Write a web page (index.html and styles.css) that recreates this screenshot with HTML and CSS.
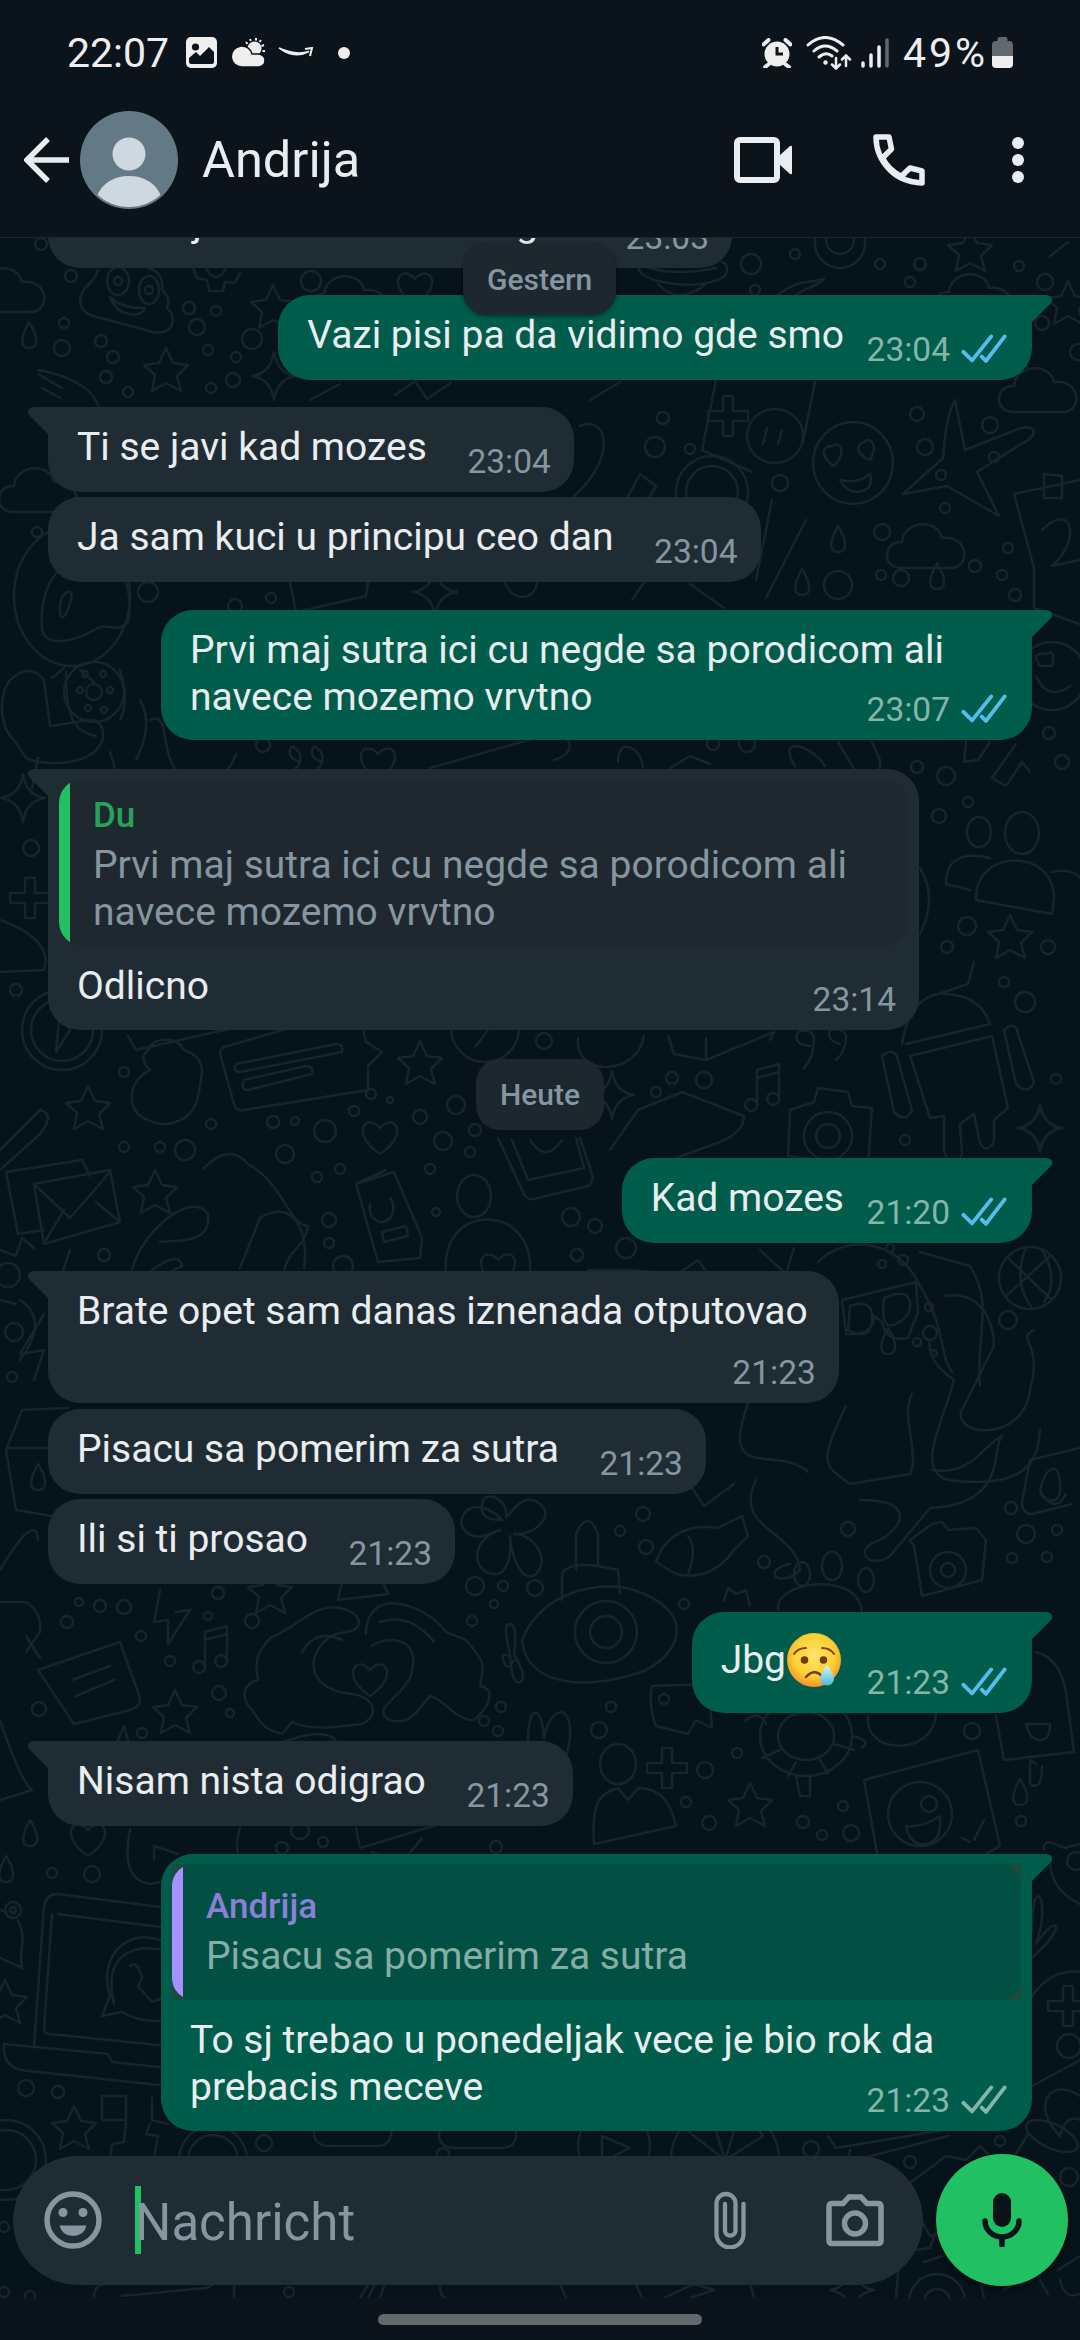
FILE: index.html
```html
<!DOCTYPE html>
<html lang="de">
<head>
<meta charset="utf-8">
<title>Andrija</title>
<link rel="stylesheet" href="styles.css">
</head>
<body>
<svg class="defs" aria-hidden="true">
  <symbol id="ticks" viewBox="0 0 46 30"><path d="M2 18l9 9L31 2M21 23l4.500 4.500L45 2" fill="none" stroke="currentColor" stroke-width="4" stroke-linecap="round" stroke-linejoin="round" transform="translate(.5 .5) scale(.96)"/></symbol>
  <path id="star" d="M0-22L7-7 22-5 11 6 15 21 0 13-14 21-11 5-22-5-7-7z"/>
  <path id="spark" d="M0-24Q3-3 22 0 3 3 0 24-3 3-22 0-3-3 0-24z"/>
  <path id="heart" d="M0 18C-30-2-14-24 0-8 14-24 30-2 0 18z"/>
  <path id="drop" d="M0-14C10 2 9 12 0 12S-9 2 0-14z"/>
  <path id="cloud" d="M-26 20C-48 20-44-8-26-6-24-28 10-30 14-10 40-14 44 20 22 20z"/>
  <path id="note" d="M-10 14v-34l22-6v34M-10-12l22-6M-10 14a6 6 0 1 1-6-5q4 0 6 5zM12 8a6 6 0 1 1-6-5q4 0 6 5z"/>
  <path id="plus" d="M-5-20h10v15h15V5H5v15H-5V5h-15V-5h15z"/>
</svg>

<div class="screen">
  <header class="top">
    <div class="status">
      <span class="clock">22:07</span>
      <svg class="s-img" viewBox="0 0 31 31"><rect width="31" height="31" rx="5" fill="#eee"/><circle cx="9.500" cy="10" r="3.600" fill="#0b141b"/><path d="M3 24v-3l7-6 4 4 9-9 5 5v10q0 2-2 2H5q-2 0-2-3z" fill="#0b141b"/></svg>
      <svg class="s-cloud" viewBox="0 0 33 29"><circle cx="22.500" cy="10.500" r="7" fill="#eee"/><path d="M14 4l1.500 2M18 1l.8 2M24 0v2.500M29 2l-1.500 2M32 7l-2.500 1M33 13h-2.500" stroke="#eee" stroke-width="2"/><path d="M10 29a10.500 10.500 0 1 1 10-13h7q6 1 6 6.500t-6 6.500z" fill="#eee" stroke="#0b141b" stroke-width="1.500"/></svg>
      <svg class="s-smile" viewBox="0 0 36 12"><path d="M1 1Q16 12.500 31 4.500 17 8.500 1 1z" fill="#eee" stroke="#eee" stroke-width="1.500"/><path d="M27 2l7-1-2 8" fill="none" stroke="#eee" stroke-width="2"/></svg>
      <i class="s-dot"></i>
      <span class="spacer"></span>
      <svg class="s-alarm" viewBox="0 0 30 30"><circle cx="15" cy="16" r="12.500" fill="#eee"/><path d="M7 26l-4 3M23 26l4 3M1.500 6.500l5-4.500M28.500 6.500l-5-4.500" stroke="#eee" stroke-width="4" stroke-linecap="round"/><path d="M15 9v7h6" fill="none" stroke="#0b141b" stroke-width="3"/></svg>
      <svg class="s-wifi" viewBox="0 0 46 34" fill="none" stroke="#eee" stroke-width="3" stroke-linecap="round"><path d="M2 9q17-15 35 0M8 15q11-10 23 0M13 21q7-6 13-1"/><circle cx="19.500" cy="26.500" r="1.500" fill="#eee" stroke-width="1.500"/><path d="M30 22v10M26 28.500l4 4 4-4M40 30V20M36 23.500l4-4 4 4" stroke-width="2.500"/></svg>
      <svg class="s-signal" viewBox="0 0 28 30" stroke-width="3.500" stroke-linecap="round" stroke="#eee"><path d="M2 25v3M10 17v11M18 9v19"/><path d="M26 2v26" stroke="#62686e"/></svg>
      <span class="percent">49%</span>
      <svg class="s-batt" viewBox="0 0 21 31"><path d="M5.500 4V2q0-2 2-2h6q2 0 2 2v2H17q4 0 4 4v11H0V8q0-4 4-4z" fill="#62686e"/><path d="M0 19h21v8q0 4-4 4H4q-4 0-4-4z" fill="#eee"/></svg>
    </div>
    <div class="bar">
      <svg class="back" viewBox="0 0 46 46"><path d="M45 23H4M24 2L3 23l21 21" fill="none" stroke="#e9edef" stroke-width="5.500"/></svg>
      <svg class="avatar" viewBox="0 0 98 98"><defs><clipPath id="face"><circle cx="49" cy="49" r="47"/></clipPath></defs><circle cx="49" cy="49" r="49" fill="#637985"/><g fill="#cfd8e0" clip-path="url(#face)"><circle cx="49" cy="43" r="16.500"/><path d="M17 85c5-13 17-20 32-20s27 7 32 20v13H17z"/></g></svg>
      <span class="name">Andrija</span>
      <span class="spacer"></span>
      <svg class="video" viewBox="0 0 58 46"><rect x="3" y="3" width="40" height="40" rx="3" fill="none" stroke="#e9edef" stroke-width="6"/><path d="M45 19l11-10q2-1 2 1v26q0 2-2 1L45 27z" fill="#e9edef"/></svg>
      <svg class="phone" viewBox="0 0 52 52"><path d="M3 3h13l2.500 12-9 9C14 33 20 38 28 42.500l9-8.500L49 37v12Q29 48 17 36 3 22 3 3zM28 43l4-4" fill="none" stroke="#e9edef" stroke-width="5.500" stroke-linejoin="round"/></svg>
      <svg class="more" viewBox="0 0 12 46" fill="#e9edef"><circle cx="6" cy="6" r="6"/><circle cx="6" cy="23" r="6"/><circle cx="6" cy="40" r="6"/></svg>
    </div>
  </header>

  <main class="chat">
    <svg class="wallpaper" viewBox="0 238 1080 2060" aria-hidden="true">
      <g id="dots">
        <path class="dots" d=""/>
      </g>
      <g>
        <use href="#star" x="273" y="307"/><use href="#star" x="166" y="370"/><use href="#star" x="970" y="250"/><use href="#star" x="1068" y="303"/><use href="#star" x="155" y="1192"/><use href="#star" x="420" y="1063"/><use href="#star" x="88" y="1108"/><use href="#star" x="175" y="1712"/><use href="#star" x="270" y="1592"/><use href="#star" x="1010" y="937"/><use href="#star" x="5" y="2002"/><use href="#star" x="74" y="2128"/><use href="#star" x="750" y="1805"/>
        <use href="#spark" x="274" y="376"/><use href="#spark" x="435" y="592"/><use href="#spark" x="23" y="798"/><use href="#spark" x="612" y="1095"/><use href="#spark" x="1040" y="1128"/><use href="#spark" x="852" y="2290"/>
        <use href="#heart" x="415" y="287"/><use href="#heart" x="378" y="762"/><use href="#heart" x="380" y="1136"/><use href="#heart" x="370" y="1678"/><use href="#heart" x="498" y="1268"/><use href="#heart" x="88" y="1838"/>
        <use href="#drop" x="29" y="336"/><use href="#drop" x="838" y="540"/><use href="#drop" x="802" y="583"/><use href="#drop" x="937" y="577"/><use href="#drop" x="888" y="1342"/><use href="#drop" x="30" y="1834"/><use href="#drop" x="6" y="1870"/><use href="#drop" x="1020" y="1793"/><use href="#drop" x="38" y="1478"/>
        <use href="#cloud" x="8" y="292"/><use href="#cloud" x="975" y="298"/><use href="#cloud" x="1040" y="392"/><use href="#cloud" x="928" y="548"/><use href="#cloud" x="40" y="492"/><use href="#cloud" x="350" y="300"/><use href="#cloud" x="355" y="2126"/><use href="#cloud" x="480" y="2128"/>
        <use href="#note" x="767" y="1090"/><use href="#note" x="215" y="1652"/>
        <use href="#plus" x="30" y="898"/><use href="#plus" x="667" y="1768"/><use href="#plus" x="728" y="416"/><use href="#plus" x="1068" y="2006"/>
      </g>
      <!-- grinning swirl, gear, saucer, brush -->
      <path d="M98 270c-4 14-14 14-17 26-4 14 8 20 20 22l52 14c22 4 24-16 14-24 4-10-2-16-5-18 2-14-6-20-14-22M110 297q12 12 35 11-3 8-16 6t-19-17z"/>
      <ellipse cx="118" cy="281" rx="11" ry="14"/><ellipse cx="149" cy="290" rx="10" ry="14"/><circle cx="118" cy="281" r="4"/><circle cx="149" cy="290" r="4"/>
      <path d="M193 268l4 10 10 2 2 11h14l2-9 10 1 5-10M206 268q10 18 20 0M640 262c-6 12 8 16 22 20 20 4 45 4 60-4 8-6 6-14 0-16M658 284q20 22 48 0M650 268q28 8 66 0"/>
      <path d="M778 295c20-16 32-12 46-16-8 8-22 10-28 16M1050 256l18-14M38 370c24 4 60 16 62 44M38 374l24 14M42 388l18 10M310 400l30-16M395 395l20-14 12 18 24-16M590 400l30-18"/>
      <!-- calculator, emoji, aeroplane, cards -->
      <path d="M716 380l-14 70 50 22M815 382l-12 60"/><ellipse cx="775" cy="436" rx="28" ry="27"/><path d="M767 428l-4 16M782 430l-4 14"/>
      <ellipse cx="853" cy="463" rx="40" ry="41"/><path d="M832 446c-12 0-10 12 2 20 12-12 8-26-2-20zM864 442c-10 4-6 14 6 18 8-14 2-24-6-18zM840 480q18 4 30-6 4 16-12 18-12 0-18-12z"/>
      <path d="M955 400c-10 20-10 40-12 58l-40 36 44-8 52 30-22-44 44-28c18-8 16-20 0-16l-56 22z"/>
      <path d="M1080 480l-66 14 20 74v40l46 16M1044 474v24h18v-22zM1042 530c30-30 40 10 10 36l28-6"/>
      <path d="M580 426c26-12 40 30-8 72M626 500l14-26 16 12-10 16"/><circle cx="712" cy="492" r="26"/><circle cx="712" cy="492" r="36"/>
      <path d="M772 500l-16 80M806 520l-40 78M632 600l30-44M690 584l34 24"/>
      <!-- balloon -->
      <ellipse cx="72" cy="596" rx="58" ry="70"/><path d="M42 628c-4-50 30-80 56-76 24 6 36 40 30 70-14 14-18-2-34 8-20 12-50 18-52-2zM64 668l-12 10M80 670l14 12M60 610q0-16 8-18t-2 22q-6 8-6-4zM290 582l6 30 70-16 2-14M505 582c6 20 30 20 32 0"/>
      <!-- glove, cookie, flowers -->
      <path d="M10 680c-14 20-8 50 4 60l12 18c24 10 60 4 70-8 12-12 8-30-6-30l-40 6-6-46q-14-18-34 0zM38 758l-6 30M110 752l10 34M66 672c0 50 10 60 30 64M120 670q10 30 0 50"/>
      <circle cx="94" cy="692" r="30"/><path d="M140 700q14 24-4 60M150 720c20-10 10 30 26 50 20 24 50 14 60-16"/>
      <path d="M300 762q-12-4-10-12t10 4q2 10-6 16M322 762q-12-4-10-12t10 4q2 10-6 16M430 768l120-34c20-4 30 20 4 26M618 762c0-30 30-10 24 12M670 768l20-12 20 8M795 766c-20-34 20-18 30 0M838 742l20 34q24 4 22-16l-8-18M966 742l-2 20 14-2 12-18M1016 744l-24 34 14 8 16-24 8 10"/>
      <circle cx="1052" cy="676" r="34"/><path d="M1036 676q12 26 34 10M1040 666q-10-14 6-12 10-6 6 12z"/>
      <!-- people -->
      <ellipse cx="979" cy="832" rx="12" ry="15"/><ellipse cx="1022" cy="833" rx="17" ry="21"/><path d="M976 898c0-50 78-50 78 0l-2 16-76-14zM970 890l-24-6q0-36 44-26M1052 872q20-4 28 6M920 868q18 30 0 66M0 920q54 20 44 50L0 972"/>
      <!-- compass, speech card, tree -->
      <circle cx="62" cy="1030" r="40"/><circle cx="62" cy="1030" r="31"/><path d="M60 1010l10 20-14 22zM128 1036l8 14 150-34 70-6M228 1046l130-38 8 34 16 10-14 14v24l-124 20q-8 2-10-6l-14-50q0-8 8-8zM236 1064l100-20q8 0 6 8l-102 20q-8 0-4-8zM244 1080l62-14q8 0 6 8l-64 16q-8 0-4-10z"/>
      <path d="M150 1070q-12-12-2-20 4-10 16-10 14-2 20 10 18 6 18 22-2 16-4 24c-4 24-30 34-50 24-24-8-20-40 2-50z"/>
      <circle cx="485" cy="1028" r="34"/><path d="M476 1046l18-24M578 1038c-4 40 60 38 66-2M668 1036l6 18 32 6 68-28-4 8M706 1060v-22"/>
      <!-- robot and camera -->
      <path d="M902 1044c4-30 20-48 36-50l30-10 6-22M942 994q38 0 48 30l-84 20M910 1056l82-20 16 72-14 12v22q-12 16-16-8l-4-20-14 10 2 30q-10 24-18-4v-34l-14 2zM882 1056q12-10 16 4l14 50q-6 14-18 2zM1004 1030q12-10 14 4l16 48q-6 14-18 2z"/>
      <path d="M790 1110l24-8 4-14 30 4 4 14 20 2-4 58-80-10z"/><circle cx="828" cy="1136" r="24"/><circle cx="828" cy="1136" r="12"/>
      <path d="M810 1046q-18-2-12-14 14-4 16 6 0 20-10 30M840 1044q-14-4-10-14 12-4 16 6 0 16-10 24M610 1150l28-40 44-18 62 24q0 16-24 26l-44 16M0 1150l40-40q16 4 0 24L0 1170"/>
      <!-- envelope, bird, bag -->
      <path d="M6 1172l76-12 8 16M6 1172l12 62 26-4M34 1184l76-14 10 52-76 22zM34 1184l36 34 40-46M46 1240l18-30M120 1222l-24-20"/>
      <path d="M204 1168q26-26 44-4c36 20 40 60 60 62-4 24-20 22-24 46M132 1270c10-40 60-80 76-56 4 30-30 26-48 28M240 1268l20-50c30-20 50 10 44 50M152 1270q28-20 30-4l-28 14"/>
      <path d="M356 1184l38-12 28 66-2 20-42 4zM356 1184l30-14M370 1204a12 14 0 1 0 20-6M382 1232l24-6 2 10-24 6z"/>
      <path d="M498 1138l26 56q4 8 14 4l50-12q6-4 4-12l-12-36M512 1140l16 40 56-12-8-30M530 1140q16 24 32 0"/>
      <ellipse cx="474" cy="1196" rx="17" ry="21"/><path d="M446 1272c-6-70 88-70 84 0M588 1270h40l50 4 20-14 10 14"/>
      <!-- glasses, octopus, ball -->
      <path d="M842 1300l74-18 2 30-10 26q-22 4-26-16l-8-6q0 20-28 18zM850 1306q24-8 22 14t-24 10zM884 1298q24-10 26 4t-14 22-12-26z"/>
      <circle cx="1030" cy="1278" r="31"/><path d="M1008 1258l44 42M1006 1296l44-40M1026 1248q-14 34 6 60M1042 1250q18 30 2 52"/>
      <path d="M760 1250l26 24 8-26M818 1262c30-30 80-20 100 20 30 50 20 70 34 90M920 1252l50 14c24 40 6 60 10 120M944 1296c40-6 50 30 50 50l-30 60c-20 30 60 40 66-16 14-50-16-50 4-60M930 1340q-4 20 24 40c-10 40-40 90-6 100 80 10 90-20 92-50M748 1404c-30 80 30 40 60 68M846 1406c-30 60-20 60 4 78l60-10c10-20-10-60 2-80M756 1480c-24 50 40 50 44 90-20 20-40 0-10-6M860 1500c60 0 40 30 20 40-30 10-10 30 10 16l40-48c80-4 60-60 72-72-20 10-30 40-70 34"/>
      <path d="M20 1300q30 20 0 60M0 1250l16 6 6-18 12 10M0 1300l16 4M44 1314l-24 40 24-4-10 30M22 1410l46-2M22 1410l-16 40 10 60 36 6M6 1448h46M60 1280l10-30"/>
      <path d="M700 1474l-8 14 12 18 30-22M1030 1460l50-12M1030 1460l-8 42q0 12 10 12l40-10M1046 1474q12-14 14 8t-12 18-2-26M1040 1490q14 26 26 4"/>
      <!-- flower and fish -->
      <path d="M502 1520c-30-30-50 0-36 12 10 8 20 4 34-2-30 10-28 40-8 44 14 2 20-14 18-38 2 26 14 48 26 38 14-12 0-40-22-40 20 2 42-18 26-30-14-12-26 4-34 14 4-20-24-30-24-12-2 12 10 14 20 14z"/>
      <path d="M656 1562c10-30 36-38 62-34l24-12 6 20-14 14c-14 20-34 30-58 24zM688 1536q10 12 0 38M576 1570v-36q12-26 22 0v32l20 4 2 24M562 1600v-26q6-12 36-8M910 1540l22-16 10-2 6 8 28-2 10 12-4 40-60 16-8-50z"/>
      <circle cx="948" cy="1570" r="18"/><circle cx="948" cy="1570" r="7"/><ellipse cx="802" cy="1574" rx="8" ry="12"/><ellipse cx="832" cy="1566" rx="10" ry="14"/><ellipse cx="866" cy="1580" rx="8" ry="12"/><path d="M724 1600l4-12 8 6 10-4 4 16M778 1610c-4-30 84-40 84 4M0 1570q36-60 38-30"/>
      <!-- heart hands and flying eye -->
      <path d="M258 1680c-20 6-14 22-6 30 10 14 12 20 30 24l10-12c20 10 50 4 70 2 20-10 10-28-10-30-60-6-40-60-6-62 20-2 16-20-6-24-24-6-44 20-70 30-12 14-16 20-12 42zM366 1634c0-50 60-30 80-2l20 8c16 20 20 20 14 46 20 4 4 26-6 34-20 0-28-20-44-24-14 16-20 30-40 24-20-10 10-22 20-42 14-40-20-44-38-32M302 1652q14-24 40-12M380 1622q30-10 54 20"/>
      <path d="M522 1640c20-50 80-60 112-50 60 20 50 60 12 80-50 20-120 20-124-30z"/><circle cx="606" cy="1632" r="31"/><circle cx="606" cy="1632" r="16"/><path d="M510 1654q-8-32 0-30t4 30q14 24 6 28t-10-28zM510 1656q-10-4-6 6t10-2"/>
      <path d="M0 1602h26q16 10 14 30l-14 20M26 1636l14 22M38 1670l82-28 18 50q6 14-8 18l-56 14zM72 1680l38-14M76 1696l38-16M160 1590l-6 32 14-2 0 24 22-34-14 2M338 1600l4-18 40-2 6 14z"/>
      <!-- camera card, lifebuoy, person -->
      <path d="M652 1686l56-2 4 44-16-8-8 14-32-8q-8-20-4-40z"/><circle cx="664" cy="1699" r="5"/>
      <ellipse cx="806" cy="1736" rx="46" ry="40"/><ellipse cx="806" cy="1736" rx="28" ry="24"/><path d="M780 1750l-18 8M796 1762l-8 14M820 1760l8 14M834 1744l20 6M746 1720q14-10 20 4M852 1736q20 4 10 12M796 1776l4 20h10v-20M868 1716c-4 40 66 40 68-2"/>
      <ellipse cx="618" cy="1764" rx="18" ry="20"/><path d="M594 1844c-2-30 0-50 24-56l10 12 10-12c26 0 34 20 38 38zM528 1740c0-36 14-36 16-2 4-28 28-40 26 0l-4 20M278 1744q50-20 60 0M0 1720q20 60 32 70L0 1800M118 1740l6-14 4 14"/>
      <path d="M864 1780l114-30 22 96-14 8v12M864 1780l16 90M1036 1652q24 6 30 40l8 60-70 8-8-44M1036 1764l-6-4v24q12 8 12-18M1026 1724h24q0 16-10 16t-14-16"/><circle cx="920" cy="1814" r="32"/><path d="M906 1826q16 2 34-10 2 26-14 28t-20-18zM962 1838l8 4M974 1840l10-20"/><circle cx="929" cy="1804" r="8"/>
      <!-- laptop -->
      <path d="M34 2046l10-140q2-12 14-12l110 14M52 1914l-8 114q0 6 6 6l118 12M58 1914l110 14M4 2044l104 10 4 8 56 6M4 2044q-2 20 16 26l148 16M102 2016l8-20c-14-46 26-72 58-52M102 2016l20-4q20 12 46 8M114 2004q-12-50 30-56l24 2M130 1966q8-6 12 12l-4 8 14 16 10-4 6 6"/>
      <circle cx="13" cy="1910" r="8"/><circle cx="13" cy="1910" r="3"/><path d="M0 1910l6 2M18 1920c10 20 0 30 4 48L0 1958M102 2096h24v24h-24zM152 2098v22l16 4M126 2122l-2 20-12 2-2 16M150 2124l-4 10 12 2-4 22M130 1830q-10 50 20 54l30-6M154 1860v-14l24 8M240 1828q-6 20 0 30M356 1828l4 20 80-24M372 1852l30 10 20-24"/>
      <circle cx="6" cy="2160" r="40"/><circle cx="6" cy="2160" r="30"/><circle cx="213" cy="2160" r="34"/><circle cx="213" cy="2160" r="25"/><circle cx="614" cy="2146" r="36"/><path d="M602 2136l28 12-28 14z"/><circle cx="725" cy="2160" r="54"/><path d="M725 2160l-36-28q8-8 24-10zM725 2160l12-38q20 2 26 14zM725 2160h-44M725 2160h44"/>
      <!-- right edge creatures -->
      <path d="M1044 1850q-2-14 20-2l16-4M1050 1860q0 30 30 44M1032 1930c0-60 20-30 4 14 20-30 30-20 6 4l-10 10M1032 1996q20-28 48-24M1032 2086l48-26M1080 2096c-30-20-50 10-20 40 4-16 12-20 20-16"/><circle cx="1076" cy="1861" r="9"/><ellipse cx="1052" cy="2136" rx="28" ry="12" transform="rotate(25 1052 2136)"/><path d="M1028 2134l-16 26M828 2136l8 12 120-20M850 2150l-2 12 100-26M906 2186l40-30 20 4 14-14 8 8M910 2200l20 36 16-6M896 2298l4-46 30-4 6-16 34 4 4 20 10 42M924 2262l18-6M1004 2290l30-20 14 24M1058 2270l22-14M1060 2280q4 20 20 14"/><circle cx="937" cy="2302" r="28"/><circle cx="937" cy="2302" r="13"/>
      <path d="M94 2298q0-14 12-14l104-10q12 8-4 14l-84 8M234 2282v16M360 2298l10-16M374 2286l-6 12M384 2286l-4 12M440 2284q0 14 6 14M664 2298l30-14 20 6-24 8M754 2298l-4-16 60-6M560 2284l6 14M634 2280l8 18"/>
    </svg>

    <div class="day floating">Gestern</div>

    <div class="thread">
      <div class="msg in cut"><p class="text">Samo javi kad mozes negde</p><span class="meta">23:03</span></div>
      <div class="msg out tail near"><p class="text">Vazi pisi pa da vidimo gde smo</p><span class="meta">23:04<svg class="ticks read"><use href="#ticks"/></svg></span></div>
      <div class="msg in tail near"><p class="text">Ti se javi kad mozes</p><span class="meta">23:04</span></div>
      <div class="msg in next"><p class="text">Ja sam kuci u principu ceo dan</p><span class="meta">23:04</span></div>
      <div class="msg out tail wide two"><p class="text">Prvi maj sutra ici cu negde sa porodicom ali<br>navece mozemo vrvtno</p><span class="meta">23:07<svg class="ticks read"><use href="#ticks"/></svg></span></div>
      <div class="msg in tail wide far quoted">
        <blockquote class="quote mine"><b>Du</b><p>Prvi maj sutra ici cu negde sa porodicom ali<br>navece mozemo vrvtno</p></blockquote>
        <p class="text">Odlicno</p><span class="meta">23:14</span>
      </div>
      <div class="day">Heute</div>
      <div class="msg out tail"><p class="text">Kad mozes</p><span class="meta">21:20<svg class="ticks read"><use href="#ticks"/></svg></span></div>
      <div class="msg in tail below"><p class="text">Brate opet sam danas iznenada otputovao</p><span class="meta">21:23</span></div>
      <div class="msg in next gap6"><p class="text">Pisacu sa pomerim za sutra</p><span class="meta">21:23</span></div>
      <div class="msg in next"><p class="text">Ili si ti prosao</p><span class="meta">21:23</span></div>
      <div class="msg out tail tall"><p class="text">Jbg<svg class="emoji" viewBox="0 0 54 54" role="img" aria-label="😢">
        <defs><radialGradient id="skin" cx=".5" cy=".42" r=".58"><stop offset="0" stop-color="#ffe36b"/><stop offset=".65" stop-color="#fdd033"/><stop offset="1" stop-color="#f3932b"/></radialGradient><linearGradient id="tear" x2="0" y2="1"><stop offset="0" stop-color="#d6f7f6"/><stop offset="1" stop-color="#48b9dc"/></linearGradient></defs>
        <circle cx="27" cy="27" r="27" fill="url(#skin)"/><path d="M7 21q4-6 12-6M47 21q-4-6-12-6" fill="none" stroke="#7a4a12" stroke-width="2" stroke-linecap="round"/><circle cx="17.500" cy="27" r="3.800" fill="#6b3f10"/><circle cx="36.500" cy="27" r="3.800" fill="#6b3f10"/><path d="M19 44q8-9 16-1" fill="none" stroke="#6b3f10" stroke-width="2.500" stroke-linecap="round"/><path d="M40 32q7 9 7 14a7 6.500 0 0 1-14 0q0-5 7-14z" fill="url(#tear)"/></svg></p><span class="meta">21:23<svg class="ticks read"><use href="#ticks"/></svg></span></div>
      <div class="msg in tail"><p class="text">Nisam nista odigrao</p><span class="meta">21:23</span></div>
      <div class="msg out tail wide quoted">
        <blockquote class="quote theirs"><b>Andrija</b><p>Pisacu sa pomerim za sutra</p></blockquote>
        <p class="text">To sj trebao u ponedeljak vece je bio rok da<br>prebacis meceve</p><span class="meta">21:23<svg class="ticks"><use href="#ticks"/></svg></span>
      </div>
    </div>

    <div class="composer">
      <div class="field">
        <svg class="smile" viewBox="0 0 58 58"><circle cx="29" cy="29" r="26" fill="none" stroke="#8696a0" stroke-width="5.500"/><g fill="#8696a0"><circle cx="19" cy="21.500" r="4.500"/><circle cx="39" cy="21.500" r="4.500"/><path d="M15.500 34.500h27Q40 45 29 45T15.500 34.500z"/></g></svg>
        <i class="caret"></i>
        <span class="hint">Nachricht</span>
        <svg class="clip" viewBox="0 0 32 58"><path d="M29.500 13v30a13.500 13.500 0 0 1-27 0V12.500a9.500 9.500 0 0 1 19 0V40a5.300 5.300 0 0 1-10.500 0V13" fill="none" stroke="#8696a0" stroke-width="4.300" stroke-linecap="round"/></svg>
        <svg class="cam" viewBox="0 0 58 53"><path d="M6 9.500h11l6-6.500h12l6 6.500h11q3 0 3 3v34q0 3-3 3H6q-3 0-3-3v-34q0-3 3-3z" fill="none" stroke="#8696a0" stroke-width="5.500"/><circle cx="29" cy="29.500" r="10.500" fill="none" stroke="#8696a0" stroke-width="5.500"/></svg>
      </div>
      <div class="mic"><svg viewBox="0 0 40 54"><rect x="11" y="0" width="18" height="34" rx="9" fill="#0b141b"/><path d="M3 28a17 16 0 0 0 34 0M20 44v8" fill="none" stroke="#0b141b" stroke-width="5.500" stroke-linecap="round"/></svg></div>
    </div>
  </main>
  <footer class="nav"><i></i></footer>
</div>
<script src="wallpaper.js"></script>
</body>
</html>
```
FILE: styles.css
```css
* { box-sizing: border-box; }
body { margin: 0; background: #0b141b; font-family: Roboto, "Noto Sans", sans-serif; color: #e9edef; }
p, blockquote { margin: 0; }
svg { display: block; flex: none; }
.defs { position: absolute; width: 0; height: 0; }
.spacer { flex: 1; }

.screen { width: 1080px; height: 2340px; display: flex; flex-direction: column; overflow: hidden; }

/* Header */
.top { height: 238px; flex: none; border-bottom: 1px solid #1c262c; background: #0b141b; }
.status { display: flex; align-items: center; height: 105px; padding: 0 67px 0 67px; }
.clock, .percent { font-size: 41px; line-height: 48px; color: #eee; }
.percent { letter-spacing: 3px; margin-left: 14px; }
.s-img { width: 31px; height: 31px; margin-left: 17px; }
.s-cloud { width: 33px; height: 29px; margin-left: 15px; }
.s-smile { width: 36px; height: 12px; margin-left: 13px; }
.s-dot { width: 12px; height: 12px; border-radius: 50%; background: #eee; margin-left: 24px; }
.s-alarm { width: 30px; height: 30px; }
.s-wifi { width: 46px; height: 34px; margin-left: 14px; }
.s-signal { width: 28px; height: 30px; margin-left: 9px; }
.s-batt { width: 21px; height: 31px; margin-left: 4px; }
.bar { display: flex; align-items: center; height: 109px; padding: 0 56px 0 24px; }
.back { width: 46px; height: 46px; }
.avatar { width: 98px; height: 98px; margin-left: 10px; }
.name { font-size: 50.500px; line-height: 60px; margin-left: 24px; }
.video { width: 58px; height: 46px; }
.phone { width: 52px; height: 52px; margin-left: 81px; }
.more { width: 12px; height: 46px; margin-left: 87px; }

/* Conversation */
.chat { position: relative; flex: 1; min-height: 0; overflow: hidden; background: #06131a; }
.wallpaper { position: absolute; inset: 0; width: 1080px; height: 2060px; fill: none; stroke: #17242a; stroke-width: 2.500; stroke-linejoin: round; stroke-linecap: round; }
.thread { position: relative; display: flex; flex-direction: column; align-items: flex-start; padding: 0 48px; }

.day { align-self: center; height: 71px; line-height: 71px; margin-top: 29px; padding: 0 24px; border-radius: 24px; background: #1c272e; color: #8696a0; font-size: 30px; font-weight: 500; }
.day.floating { position: absolute; z-index: 2; top: 6px; left: 463px; margin: 0; box-shadow: 0 1px 4px rgba(0, 0, 0, .5); }

.msg { position: relative; display: grid; margin-top: 28px; border-radius: 32px; font-size: 39px; line-height: 47px; }
.msg.near { margin-top: 27px; }
.msg.far { margin-top: 29px; }
.msg.next { margin-top: 5px; }
.msg.gap6 { margin-top: 6px; }
.msg.cut { margin-top: -55px; width: 684px; word-spacing: 5px; }
.in { background: #202c33; }
.out { background: #005c4b; align-self: flex-end; }
.wide { width: 871px; }

.text { grid-column: 1; grid-row: 2; padding: 17px 147px 21px 29px; white-space: nowrap; }
.out .text { padding-right: 188px; }
.out.two .text { padding: 17px 0 19px 29px; }
.quoted .text, .out.quoted .text { padding: 17px 0 20px 29px; }
.below .text { padding: 17px 31px 68px 29px; }
.tall .text { display: flex; padding: 21px 191px 26px 29px; align-items: center; height: 101px; }
.emoji { width: 54px; height: 54px; margin-left: 1px; }

.meta { grid-column: 1; grid-row: 2; align-self: end; justify-self: end; display: flex; margin: 0 23px 10px 0; font-size: 33.500px; line-height: 40px; color: #8696a0; word-spacing: 0; }
.out .meta { color: #86b5a8; margin-right: 25px; }
.ticks { width: 46px; height: 30px; margin: 4px 0 0 11px; color: #86b5a8; }
.ticks.read { color: #53bdeb; }

.tail::after { content: ""; position: absolute; top: 0; width: 20px; height: 27px; background: inherit; }
.out.tail { border-top-right-radius: 0; }
.out.tail::after { left: 100%; clip-path: path("M0 0H14C19 0 22 4 19 8L0 27Z"); }
.in.tail { border-top-left-radius: 0; }
.in.tail::after { right: 100%; clip-path: path("M20 0H6C1 0-2 4 1 8L20 27Z"); }

.quote { grid-column: 1; grid-row: 1; margin: 10px 11px 0; padding: 14px 0 11px 34px; position: relative; overflow: hidden; border-radius: 24px; background: #1e282e; color: #8696a0; line-height: 46.500px; }
.quote::before { content: ""; position: absolute; left: 0; top: 0; bottom: 0; width: 11px; background: #21c063; }
.quote b { display: block; margin-bottom: 4px; font-size: 35px; line-height: 45px; font-weight: 500; color: #25a35b; }
.theirs { padding: 20px 0 20px 34px; border-radius: 0; background: #1b4b3a; color: #86aea5; isolation: isolate; }
.theirs::before { z-index: -1; width: 100%; border-radius: 22px; background: linear-gradient(90deg, #a791ff 11px, #025043 11px); }
.theirs b { color: #8b80d8; }

/* Message field */
.composer { position: absolute; left: 0; right: 0; bottom: 12px; height: 132px; display: flex; align-items: center; padding: 0 12px 0 13px; gap: 13px; }
.field { flex: 1; height: 129px; border-radius: 65px; background: #202c33; display: flex; align-items: center; padding: 0 39px 0 31px; }
.smile { width: 58px; height: 58px; }
.caret { width: 6px; height: 68px; margin-left: 33px; background: #21c063; }
.hint { flex: 1; margin-left: -6px; font-size: 51px; line-height: 60px; padding-top: 5px; color: #8696a0; }
.clip { width: 32px; height: 58px; margin-right: 80px; }
.cam { width: 58px; height: 53px; }
.mic { width: 132px; height: 132px; border-radius: 50%; background: #21c063; display: grid; place-items: center; box-shadow: 0 3px 6px rgba(0, 0, 0, .4); }
.mic svg { width: 40px; height: 54px; }

.nav { height: 42px; flex: none; background: #0b141b; display: flex; justify-content: center; padding-top: 16px; }
.nav i { width: 324px; height: 11px; border-radius: 6px; background: #63686b; }
```
FILE: wallpaper.js
```js
// Small rings scattered between the wallpaper doodles: x, y, radius.
const rings = [
41,244,6,71,276,6,311,281,10,189,308,6,216,311,5,197,327,8,64,323,5,252,339,10,62,348,8,101,341,6,113,357,6,208,350,5,236,357,5,106,377,6,233,380,7,211,388,5,128,392,5,
751,264,10,795,254,5,880,264,5,920,264,6,1019,266,5,1045,282,8,910,282,5,755,290,5,1042,323,7,1078,352,8,840,243,25,840,240,14,
663,418,6,655,447,10,690,449,5,780,483,8,917,414,7,990,425,8,925,447,8,941,475,5,994,457,5,945,508,5,882,532,8,37,532,5,148,592,10,235,606,7,271,598,5,838,585,14,881,575,5,901,578,8,975,566,6,1002,575,5,1015,595,6,1008,548,5,263,745,7,713,744,6,747,744,8,1049,733,6,1062,762,7,
85,674,3,103,674,3,80,690,3,110,690,3,88,708,3,104,710,3,94,692,8,
917,767,6,946,776,9,968,802,5,939,816,7,967,926,9,947,947,6,1048,947,7,31,848,8,16,990,6,124,1072,5,371,1094,5,390,1100,3,354,1111,5,420,1117,7,456,1105,9,273,1122,6,295,1121,4,325,1131,11,211,1124,5,124,1147,5,160,1147,5,185,1150,10,285,1154,9,443,1141,9,475,1130,6,470,1152,5,544,1041,8,672,1078,6,704,1080,8,656,1092,5,1004,982,5,1025,1002,10,1056,1079,5,905,1140,5,
317,1177,5,340,1169,5,430,1169,5,436,1212,4,329,1220,7,329,1243,5,571,1217,9,595,1226,7,577,1255,6,626,1248,10,104,1255,6,343,1266,10,14,1332,9,12,1377,5,8,1275,12,890,1248,4,903,1260,5,882,1264,4,930,1333,7,917,1342,4,934,1353,3,929,1307,4,1008,1320,9,643,1514,7,620,1531,5,646,1547,7,848,1529,7,764,1562,6,1011,1508,6,1026,1534,9,1057,1530,5,1012,1558,5,1047,1557,5,475,1586,9,503,1586,5,535,1588,8,
79,1602,4,100,1606,6,124,1607,7,67,1622,6,208,1616,4,252,1621,7,141,1636,5,170,1661,5,218,1593,6,219,1693,7,230,1713,4,39,1709,7,142,1733,5,494,1604,4,472,1621,5,684,1604,5,611,1707,5,599,1730,8,501,1707,5,484,1721,5,498,1731,5,972,1731,8,705,1770,8,737,1753,5,686,1802,5,709,1823,7,843,1806,5,803,1822,6,851,1833,8,822,1835,5,496,1847,6,282,1848,6,323,1842,5,300,1830,9,52,1873,5,92,1874,8,1021,1821,5,
26,2088,8,58,2092,6,264,2143,8,443,2154,6,4,2227,5,4,2292,5,30,2296,5,289,2292,5,1069,2046,12,811,2149,8,1000,2141,5,910,2162,6,1069,2177,9
];
let d = "";
for (let i = 0; i < rings.length; i += 3) {
  const x = rings[i], y = rings[i + 1], r = rings[i + 2];
  d += `M${x - r} ${y}a${r} ${r} 0 1 0 ${2 * r} 0a${r} ${r} 0 1 0 ${-2 * r} 0`;
}
document.querySelector(".dots").setAttribute("d", d);
```
